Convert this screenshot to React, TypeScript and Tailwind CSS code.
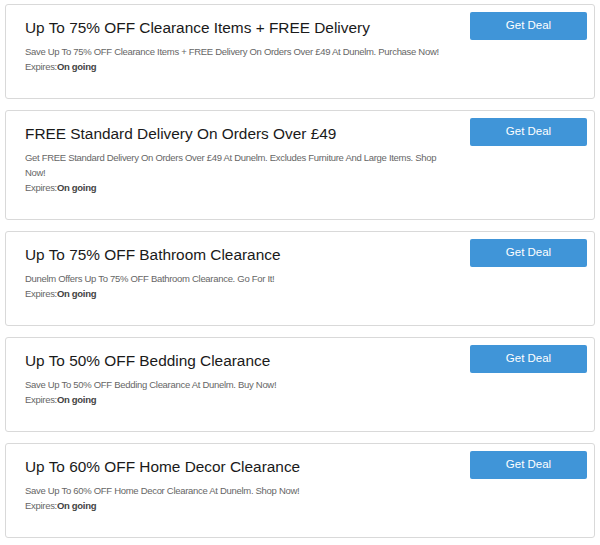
import React from "react";

const deals = [
  {
    title: "Up To 75% OFF Clearance Items + FREE Delivery",
    desc: "Save Up To 75% OFF Clearance Items + FREE Delivery On Orders Over £49 At Dunelm. Purchase Now!",
  },
  {
    title: "FREE Standard Delivery On Orders Over £49",
    desc: "Get FREE Standard Delivery On Orders Over £49 At Dunelm. Excludes Furniture And Large Items. Shop Now!",
  },
  {
    title: "Up To 75% OFF Bathroom Clearance",
    desc: "Dunelm Offers Up To 75% OFF Bathroom Clearance. Go For It!",
  },
  {
    title: "Up To 50% OFF Bedding Clearance",
    desc: "Save Up To 50% OFF Bedding Clearance At Dunelm. Buy Now!",
  },
  {
    title: "Up To 60% OFF Home Decor Clearance",
    desc: "Save Up To 60% OFF Home Decor Clearance At Dunelm. Shop Now!",
  },
];

export default function App() {
  return (
    <div
      className="w-[600px] h-[545px] bg-white pt-[4px] pl-[5px] flex flex-col gap-[11px]"
      style={{ fontFamily: '"Liberation Sans", Arial, sans-serif' }}
    >
      {deals.map((d, i) => (
        <div
          key={i}
          className="w-[590px] border border-[#d9d9d9] rounded-[3px] bg-white flex pl-[19px] pr-[7px] pt-[7px] pb-[24px]"
        >
          <div className="flex-1 pr-[20px]">
            <div className="mt-[5px] text-[15.4px] leading-[22px] text-[#1a1a1a]">{d.title}</div>
            <div className="mt-[5px] text-[9.5px] leading-[15px] tracking-[-0.3px] text-[#666666] max-w-[416px]">
              {d.desc}
            </div>
            <div className="text-[9.5px] leading-[15px] tracking-[-0.3px] text-[#666666]">
              Expires:<span className="font-bold text-[#444444]">On going</span>
            </div>
          </div>
          <div className="w-[117px] h-[28px] bg-[#4095d8] rounded-[2px] text-white text-[11.5px] leading-[18px] pt-[4px] text-center shrink-0">
            Get Deal
          </div>
        </div>
      ))}
    </div>
  );
}
